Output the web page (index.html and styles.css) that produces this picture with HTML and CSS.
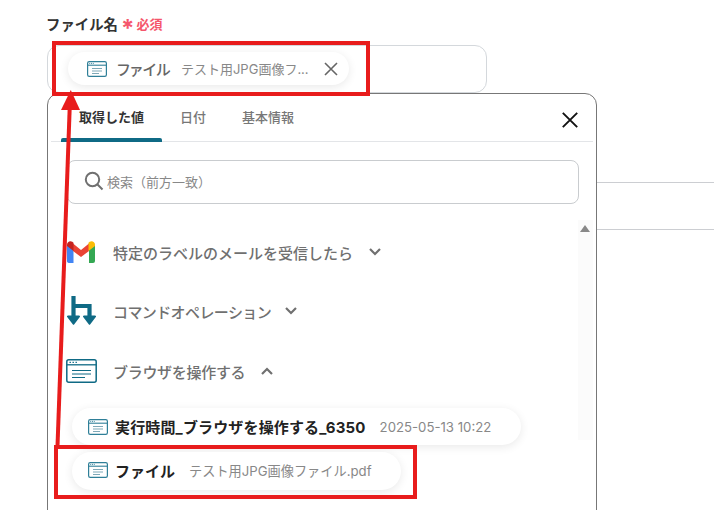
FILE: index.html
```html
<!DOCTYPE html>
<html lang="ja">
<head>
<meta charset="utf-8">
<title>ファイル名</title>
<link rel="stylesheet" href="styles.css">
</head>
<body>
<svg width="0" height="0" class="defs">
  <symbol id="win" viewBox="0 0 20 16">
    <rect x=".6" y=".6" width="18.8" height="14.8" rx="1.6" fill="#fff" stroke="#2f7f98" stroke-width="1.2"/>
    <path d="M.6 4.2h18.8" stroke="#2f7f98" stroke-width="1.1"/>
    <path d="M2.2 2.4h1M4 2.4h1M5.800 2.4h1" stroke="#2f7f98" stroke-width=".9"/>
    <path d="M5 7.500h10M5 10h10M5 12.500h7" stroke="#7fa9b8" stroke-width="1"/>
  </symbol>
</svg>
<main class="page">
  <div class="label"><span>ファイル名</span><span class="star">*</span><span class="req">必須</span></div>
  <div class="field">
    <div class="chip chip-top">
      <svg class="ico"><use href="#win"/></svg>
      <span class="chip-name">ファイル</span>
      <span class="chip-sub">テスト用JPG画像フ...</span>
      <svg class="chip-x" viewBox="0 0 14 14"><path d="M1 1l12 12M13 1L1 13" stroke="#666" stroke-width="1.6" fill="none"/></svg>
    </div>
  </div>
  <div class="lower">
    <section class="popup">
      <div class="tabs">
        <div class="tab active">取得した値</div>
        <div class="tab">日付</div>
        <div class="tab">基本情報</div>
        <svg class="close" viewBox="0 0 16 16"><path d="M.8.8l14.4 14.4M15.2.8L.8 15.2" stroke="#111" stroke-width="1.9" fill="none"/></svg>
      </div>
      <div class="search">
        <svg class="glass" viewBox="0 0 20 20"><circle cx="8.500" cy="8.500" r="6.700" fill="none" stroke="#707070" stroke-width="2"/><path d="M13.500 13.500l5 5" stroke="#707070" stroke-width="2"/></svg>
        <span>検索（前方一致）</span>
      </div>
      <div class="scroll-up"><i></i></div>
      <div class="group g1">
        <svg class="app gmail" viewBox="0 0 28 22">
          <path d="M0 4v15.500A2 2 0 0 0 2 22h4.500V9z" fill="#4285f4"/>
          <path d="M22 9v13h4a2 2 0 0 0 2-2V4z" fill="#34a853"/>
          <path d="M6 2.500 14 9l8-6.500V10l-8 6-8-6z" fill="#ea4335"/>
          <path d="M0 3.500C0 .8 3.200-.8 5.300.8L6.500 1.800V10L0 5z" fill="#c5221f"/>
          <path d="M21.500 1.800 22.700.8C24.800-.8 28 .8 28 3.500V5l-6.500 5z" fill="#fbbc04"/>
        </svg>
        <span class="gname">特定のラベルのメールを受信したら</span>
        <svg class="chev" viewBox="0 0 12 8"><path d="M1 1l5 5 5-5" fill="none" stroke="#707070" stroke-width="2.200"/></svg>
      </div>
      <div class="group g2">
        <svg class="app cmd" viewBox="0 0 29 30">
          <path d="M6.500 0v21M6.500 10h16v11" fill="none" stroke="#0f6a85" stroke-width="4.200"/>
          <path d="M1 19.500h11a1 1 0 0 1 .8 1.600l-5.500 7.200a1 1 0 0 1-1.600 0L.2 21.100a1 1 0 0 1 .8-1.600zM17 19.500h11a1 1 0 0 1 .8 1.600l-5.500 7.200a1 1 0 0 1-1.600 0l-5.500-7.200a1 1 0 0 1 .8-1.600z" fill="#0f6a85"/>
        </svg>
        <span class="gname">コマンドオペレーション</span>
        <svg class="chev" viewBox="0 0 12 8"><path d="M1 1l5 5 5-5" fill="none" stroke="#707070" stroke-width="2.200"/></svg>
      </div>
      <div class="group g3">
        <svg class="app brw" viewBox="0 0 31 24">
          <rect x=".8" y=".8" width="29.400" height="22.400" rx="2" fill="#fff" stroke="#0f6a85" stroke-width="1.500"/>
          <path d="M.8 5.800h29.400" stroke="#0f6a85" stroke-width="1.300"/>
          <path d="M3.500 3.300h1.400M6.500 3.300h1.400M9.500 3.300h1.400" stroke="#0f6a85" stroke-width="1.200"/>
          <path d="M6 11.500h19M6 15h19M6 18.500h13" stroke="#0f6a85" stroke-width="1.200"/>
        </svg>
        <span class="gname">ブラウザを操作する</span>
        <svg class="chev" viewBox="0 0 12 8"><path d="M1 7l5-5 5 5" fill="none" stroke="#707070" stroke-width="2.200"/></svg>
      </div>
      <div class="chip chip-a">
        <svg class="ico"><use href="#win"/></svg>
        <span class="val-name">実行時間_ブラウザを操作する_6350</span>
        <span class="val-sub">2025-05-13 10:22</span>
      </div>
      <div class="chip chip-b">
        <svg class="ico"><use href="#win"/></svg>
        <span class="val-name">ファイル</span>
        <span class="val-sub">テスト用JPG画像ファイル.pdf</span>
      </div>
    </section>
    <div class="side"><div class="rule"></div><div class="rule"></div></div>
  </div>
</main>
<svg class="marks" viewBox="0 0 714 510">
  <rect x="54" y="43" width="314" height="51" fill="none" stroke="#e81c1c" stroke-width="4"/>
  <rect x="56" y="447" width="359" height="50" fill="none" stroke="#e81c1c" stroke-width="4"/>
  <path d="M57.500 446 69.800 105" stroke="#e81c1c" stroke-width="4" fill="none"/>
  <path d="M70.800 90 80 110H61z" fill="#e81c1c"/>
</svg>
</body>
</html>
```
FILE: styles.css
```css
* { box-sizing: border-box; }
html, body { margin: 0; height: 510px; overflow: hidden; background: #fff; }
body {
  font-family: "Inter", "Noto Sans CJK JP", sans-serif;
  position: relative;
  width: 714px;
}
.defs { position: absolute; }
.page { padding: 13px 0 0 46px; height: 510px; overflow: hidden; }
.label {
  display: flex;
  align-items: center;
  height: 20px;
  font-size: 14.4px;
  font-weight: 700;
  color: #333;
}
.star { color: #f5566c; margin-left: 3px; font-size: 24px; line-height: 20px; padding-top: 11px; }
.req { color: #f5566c; font-size: 13px; margin-left: 2px; }
.field {
  margin: 12px 0 0 1px;
  width: 440px;
  height: 48px;
  border: 1px solid #d4d8dc;
  border-radius: 12px;
  padding: 6px 0 0 20px;
}
.chip {
  display: flex;
  align-items: center;
  background: #fff;
  box-shadow: 0 2px 10px rgba(0, 0, 0, .09);
}
.chip-top {
  width: 281px;
  height: 33px;
  border-radius: 17px;
  padding: 0 10px 0 19px;
}
.ico { width: 20px; height: 16px; flex: none; }
.chip-name { margin-left: 10px; font-size: 15px; color: #666; font-weight: 500; font-feature-settings: "palt"; letter-spacing: .5px; }
.chip-sub { margin-left: 10px; font-size: 13px; color: #888; flex: 1; white-space: nowrap; }
.chip-x { width: 14px; height: 14px; flex: none; margin-right: 1px; }
.lower { display: flex; align-items: flex-start; margin: 0 0 0 1px; }
.popup {
  position: relative;
  width: 550px;
  height: 480px;
  flex: none;
  border: 1px solid #777;
  border-radius: 12px;
  background: #fff;
  padding: 0 3px 0 3px;
}
.tabs {
  display: flex;
  align-items: center;
  height: 48px;
  border-bottom: 1px solid #e3e5e8;
  padding-left: 10px;
  position: relative;
}
.tab {
  height: 47px;
  padding: 0 18px;
  line-height: 47px;
  font-size: 13px;
  font-weight: 500;
  color: #777;
  position: relative;
}
.tab.active { color: #333; width: 101px; font-weight: 700; }
.tab.active::after {
  content: "";
  position: absolute;
  left: 0;
  right: 0;
  bottom: -1px;
  height: 4px;
  background: #0f6a85;
  border-radius: 2px 2px 0 0;
}
.close { position: absolute; right: 15px; top: 18px; width: 16px; height: 16px; }
.search {
  display: flex;
  align-items: center;
  margin: 18px 0 0 16px;
  width: 512px;
  height: 44px;
  border: 1px solid #c9cccf;
  border-radius: 8px;
  padding: 0 0 2px 16px;
  font-size: 13px;
  color: #888;
}
.glass { width: 20px; height: 20px; margin-right: 3px; }
.scroll-up {
  position: absolute;
  right: 3px;
  top: 126px;
  width: 15px;
  height: 220px;
  background: #fbfbfb;
}
.scroll-up i {
  display: block;
  margin: 5px 0 0 2px;
  width: 0;
  height: 0;
  border-left: 5px solid transparent;
  border-right: 5px solid transparent;
  border-bottom: 7px solid #888;
}
.group {
  display: flex;
  align-items: center;
  position: relative;
  font-size: 15px;
  font-weight: 500;
  color: #707070;
}
.gname { white-space: nowrap; }
.chev { width: 12px; height: 8px; margin-left: 16px; }
.app { flex: none; }
.gmail { width: 28px; height: 22px; margin: 0 18px 0 16px; }
.cmd { width: 29px; height: 30px; margin: 0 17px 0 16px; }
.brw { width: 31px; height: 24px; margin: 0 16px 0 15px; }
.g1 { margin-top: 37px; }
.g2 { margin-top: 33px; letter-spacing: -.6px; }
.g2 .chev { margin-left: 14px; }
.g3 { margin-top: 33px; letter-spacing: -.3px; }
.chip-a, .chip-b { margin-left: 21px; padding-left: 16px; border-radius: 19px; }
.chip-a { margin-top: 25px; width: 449px; height: 37px; }
.chip-b { margin-top: 7px; width: 329px; height: 38px; padding-bottom: 2px; }
.val-name { margin-left: 7px; font-size: 15px; font-weight: 700; color: #222; white-space: nowrap; }
.chip-a .val-name { letter-spacing: .15px; }
.val-sub { margin-left: 14px; font-size: 13.2px; color: #888; white-space: nowrap; }
.side { flex: 1; padding-top: 89px; display: flex; flex-direction: column; gap: 46px; }
.rule { height: 1px; background: #ccced2; }
.marks { position: absolute; left: 0; top: 0; width: 714px; height: 510px; pointer-events: none; }
```
